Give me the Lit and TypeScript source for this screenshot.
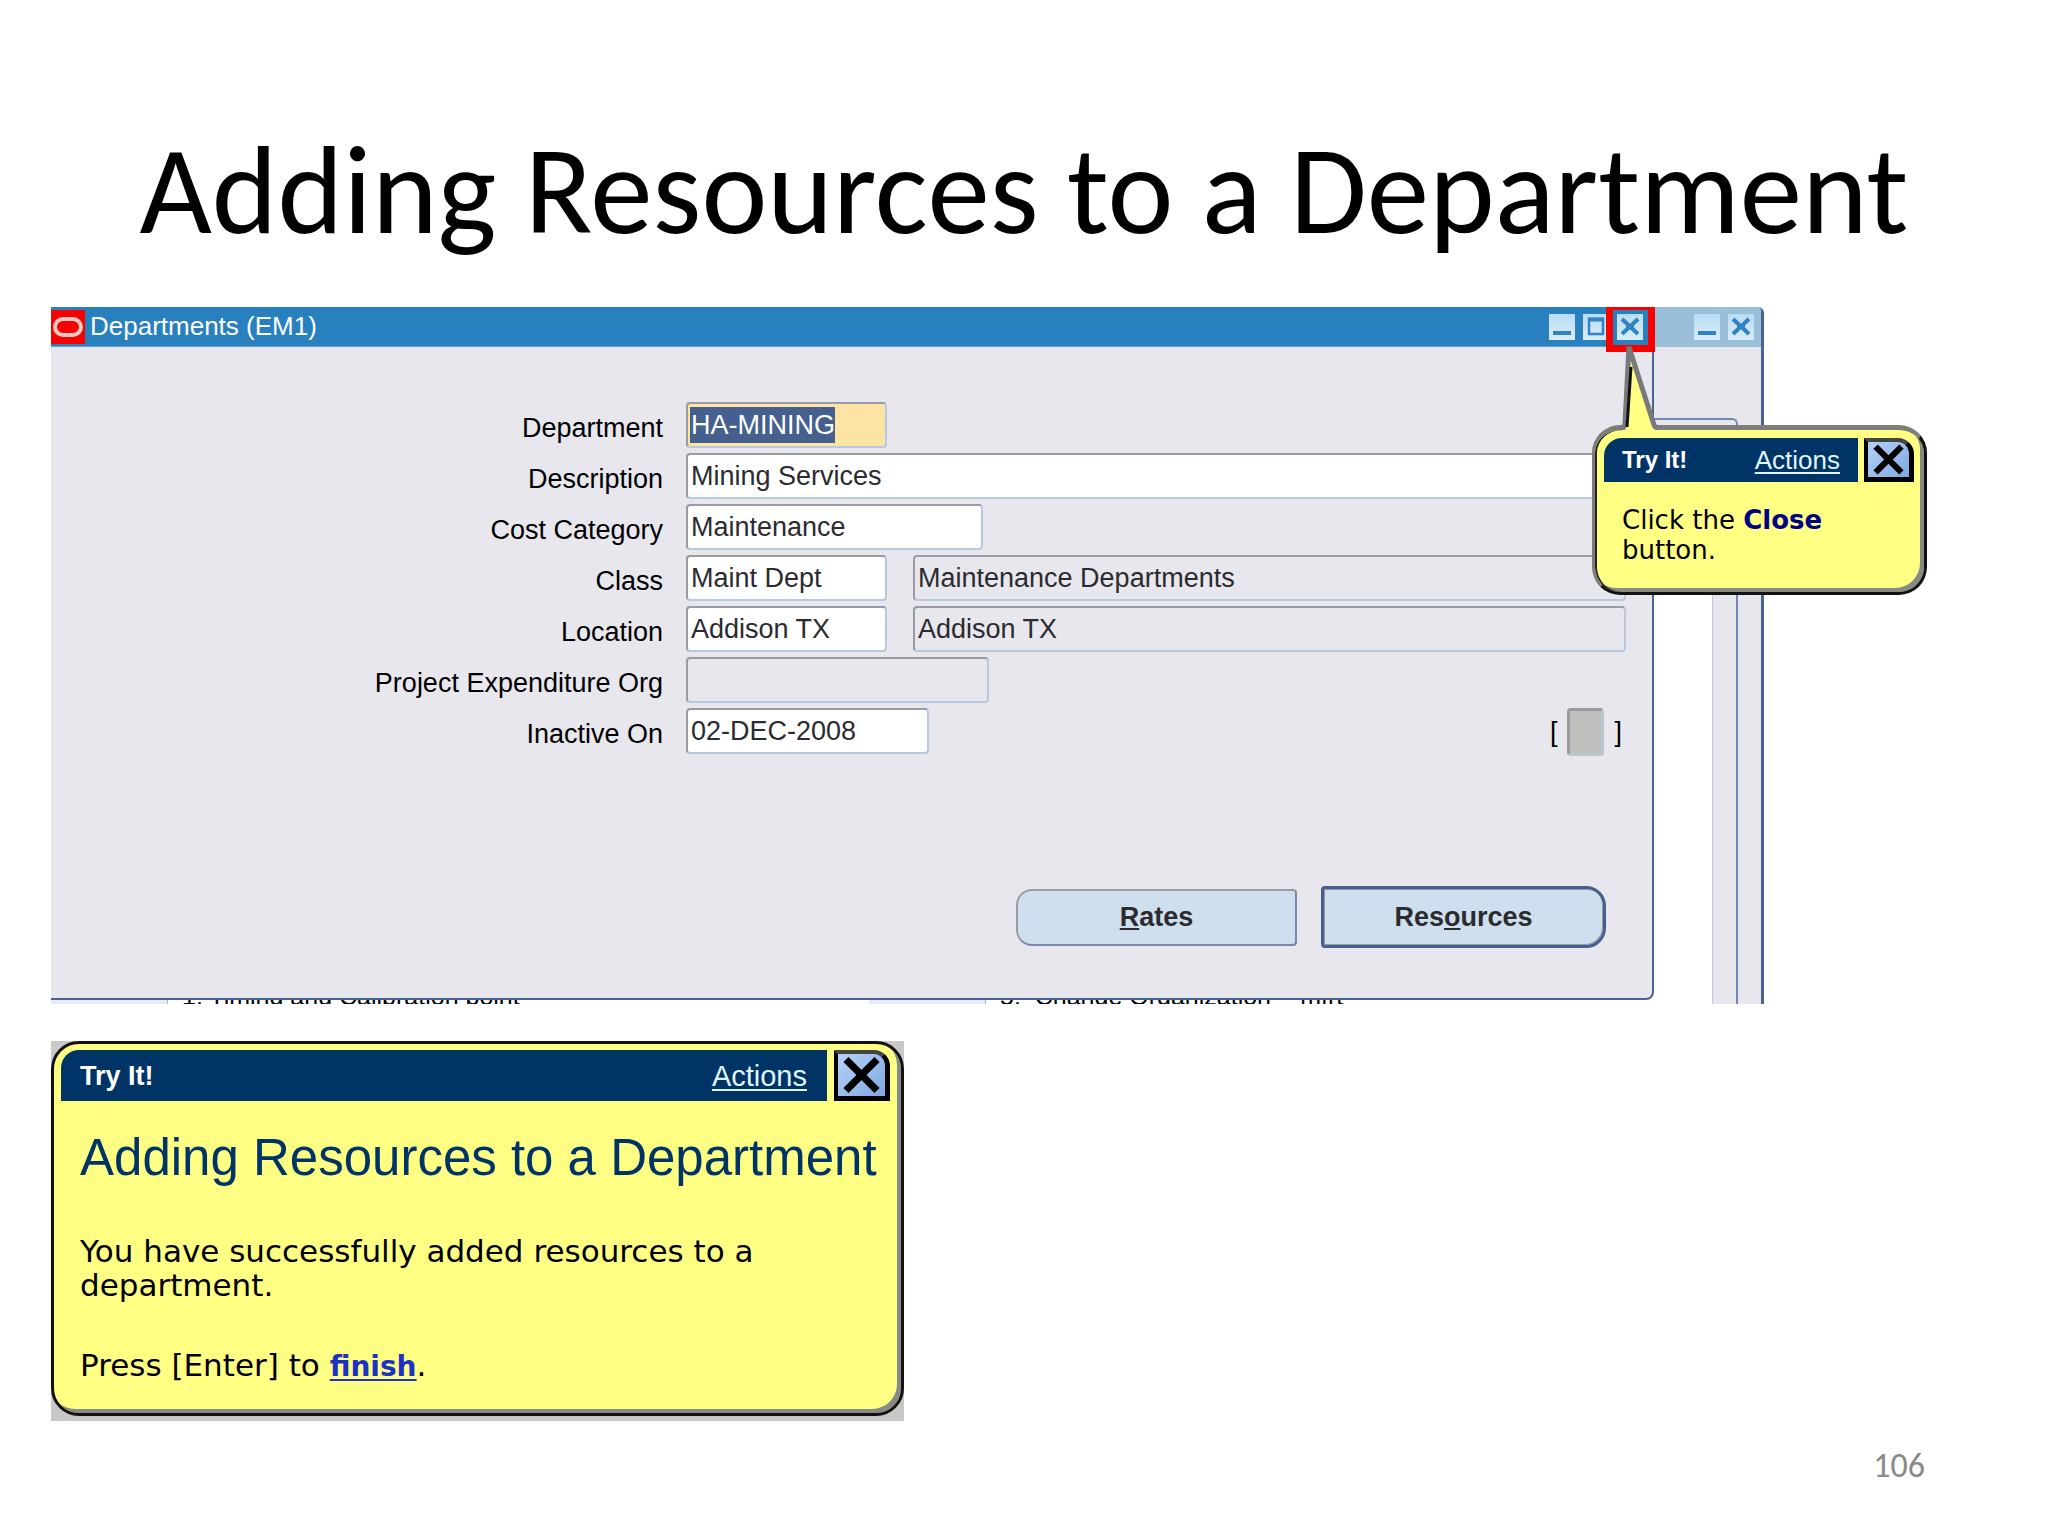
import { LitElement, html, css, svg } from "lit";
import { customElement, property } from "lit/decorators.js";

const cross = svg`<path d="M9 9 L26 26 M26 9 L9 26" />`;

@customElement("tip-balloon")
class TipBalloon extends LitElement {
  @property({ type: Boolean, reflect: true }) large = false;

  static styles = css`
    :host {
      display: block;
      box-sizing: border-box;
      background: #ffff84;
      border: 3px solid #111;
      border-top: 5px solid #7d7d7a;
      border-left-color: #7d7d7a;
      border-radius: 28px;
      box-shadow: inset 2px 0 0 #222, inset -4px -4px 0 #858a88;
      padding: 8px 10px 0 9px;
      font-family: "DejaVu Sans", Verdana, sans-serif;
      font-size: 26px;
      line-height: 30px;
      color: #000;
    }
    :host([large]) {
      border: 3px solid #111;
      box-shadow: inset -4px -4px 0 #858a88;
      padding: 6px 11px 0 7px;
      font-size: 31px;
      line-height: 34px;
    }
    .head {
      display: flex;
      gap: 6px;
      height: 44px;
    }
    :host([large]) .head {
      height: 51px;
      gap: 7px;
    }
    .bar {
      flex: 1;
      display: flex;
      align-items: center;
      justify-content: space-between;
      padding: 0 18px 0 18px;
      background: #003366;
      border-top-left-radius: 18px;
      font-family: "Liberation Sans", Arial, sans-serif;
      color: #fff;
    }
    :host([large]) .bar {
      padding: 0 20px 0 19px;
    }
    .name {
      font-size: 24px;
    }
    .actions {
      font-size: 26px;
      color: #dff6ff;
      text-underline-offset: 3px;
    }
    :host([large]) .name {
      font-size: 27px;
    }
    :host([large]) .actions {
      font-size: 29px;
    }
    .close {
      width: 50px;
      padding: 0;
      border: 5px solid #000;
      border-top-color: #444;
      border-left-width: 4px;
      border-top-width: 4px;
      border-top-right-radius: 16px;
      background: linear-gradient(135deg, #b5d2f5, #7fa9e4);
      display: grid;
      place-items: center;
    }
    :host([large]) .close {
      width: 56px;
    }
    .close svg {
      width: 100%;
      height: 100%;
      fill: none;
      stroke: #000;
      stroke-width: 4;
    }
    .body {
      padding: 23px 0 0 18px;
    }
    :host([large]) .body {
      padding: 28px 0 0 19px;
    }
  `;

  render() {
    return html`
      <div class="head">
        <div class="bar">
          <strong class="name">Try It!</strong>
          <a class="actions" href="#actions">Actions</a>
        </div>
        <button class="close" aria-label="Close tip">
          <svg viewBox="6 6 23 23">${cross}</svg>
        </button>
      </div>
      <div class="body"><slot></slot></div>
    `;
  }
}

type Row = { id: string; label: string; value: string; size: string; extra?: string };

const rows: Row[] = [
  { id: "department", label: "Department", value: "HA-MINING", size: "short key" },
  { id: "description", label: "Description", value: "Mining Services", size: "full" },
  { id: "cost", label: "Cost Category", value: "Maintenance", size: "medium" },
  { id: "class", label: "Class", value: "Maint Dept", size: "short", extra: "Maintenance Departments" },
  { id: "location", label: "Location", value: "Addison TX", size: "short", extra: "Addison TX" },
  { id: "project", label: "Project Expenditure Org", value: "", size: "long plain" },
  { id: "inactive", label: "Inactive On", value: "02-DEC-2008", size: "date" },
];

@customElement("app-root")
class AppRoot extends LitElement {
  static styles = css`
    :host {
      display: block;
      min-height: 100vh;
      box-sizing: border-box;
      background: #fff;
      color: #000;
      font-family: "Liberation Sans", Arial, sans-serif;
      font-size: 27px;
    }
    * {
      box-sizing: border-box;
    }
    .slide {
      display: flex;
      flex-direction: column;
      min-height: 100vh;
      padding: 111px 123px 50px 51px;
    }
    .title {
      margin: 0 -72px 36px 0;
      text-align: center;
      white-space: nowrap;
      font: 400 125px/160px Carlito, Calibri, "Open Sans", sans-serif;
    }
    .stage {
      position: relative;
      margin-right: 161px;
    }
    .desktop {
      display: grid;
      grid-template-columns: 1fr 107px;
      grid-template-rows: 693px 4px;
      border-right: 3px solid #4a6491;
      border-top-right-radius: 6px;
      overflow: hidden;
    }
    .window {
      display: flex;
      flex-direction: column;
      border: solid #4a6491;
      border-width: 0 2px 2px 0;
      border-bottom-right-radius: 8px;
      background: #e7e7ed;
    }
    .titlebar {
      display: flex;
      align-items: center;
      height: 40px;
      margin-right: -2px;
      padding-right: 11px;
      gap: 8px;
      background: #2980be;
      color: #fff;
      border-bottom: 1px solid #5fa4d6;
    }
    .brand {
      width: 34px;
      height: 34px;
      background: #f90000;
      display: block;
    }
    .caption {
      flex: 1;
      margin: 0 0 0 -3px;
      font-size: 26px;
      font-weight: 400;
    }
    .wbtn {
      width: 26px;
      height: 26px;
      padding: 0;
      border: 0;
      background: linear-gradient(#b9dcf3, #d9ecf9);
    }
    .wbtn svg {
      display: block;
      width: 26px;
      height: 26px;
      fill: none;
      stroke: #2f83c0;
      stroke-width: 4;
    }
    .form {
      flex: 1;
      display: flex;
      flex-direction: column;
      padding: 55px 26px 50px 0;
    }
    .rows {
      display: grid;
      grid-template-columns: 612px 1fr;
      column-gap: 23px;
      row-gap: 5px;
    }
    .label {
      text-align: right;
      line-height: 46px;
      padding-top: 3px;
      height: 46px;
    }
    .line {
      display: flex;
      gap: 26px;
    }
    .field {
      display: flex;
      align-items: center;
      height: 46px;
      border: 2px solid #b7c9df;
      border-top-color: #999ba5;
      border-left-color: #999ba5;
      border-radius: 4px;
      background: #fff;
      padding-left: 2px;
    }
    .input {
      width: 100%;
      min-width: 0;
      height: 36px;
      padding: 1px 0 0 1px;
      border: 0;
      outline: 0;
      background: transparent;
      color: #2b2b30;
      font: inherit;
    }
    .short { width: 201px; }
    .medium { width: 297px; }
    .long { width: 303px; }
    .date { width: 243px; }
    .full { flex: 1; }
    .plain { background: transparent; }
    .key { background: #fbe4a4; }
    .key .input {
      width: 145px;
      background: #45608f;
      color: #fff;
    }
    .flex {
      display: flex;
      align-items: center;
      gap: 10px;
      margin-left: auto;
      padding-right: 4px;
    }
    .flexbox {
      width: 37px;
      height: 48px;
      padding: 0;
      border: 3px solid #b9c6ce;
      border-top-color: #969ca0;
      border-left-color: #969ca0;
      border-radius: 4px;
      background: #bfbfbd;
    }
    .buttons {
      display: flex;
      align-items: center;
      justify-content: flex-end;
      gap: 24px;
      margin-top: auto;
      padding-right: 20px;
    }
    .btn {
      width: 281px;
      height: 57px;
      padding: 0;
      border: 2px solid #999ba5;
      border-bottom: 2px solid #7b88ad;
      border-right-color: #7b88ad;
      border-radius: 16px 4px 4px 16px;
      background: #cfdfee;
      color: #2b2b30;
      font: bold 27px "Liberation Sans", Arial, sans-serif;
    }
    .btn.main {
      width: 285px;
      height: 62px;
      border: 3px solid #45608f;
      border-radius: 4px 20px 20px 4px;
      box-shadow: inset 1px 1px 0 #999ba5, inset -1px -1px 0 #999ba5;
    }
    .rear {
      display: flex;
      flex-direction: column;
      grid-row: 1 / 3;
      grid-column: 2;
      background: #e7e7ed;
    }
    .rearbar {
      display: flex;
      align-items: center;
      justify-content: flex-end;
      gap: 8px;
      height: 40px;
      padding-right: 7px;
      background: #99bfd9;
    }
    .pane {
      flex: 1;
      margin: 71px 23px 0 0;
      border: 2px solid #7188b3;
      border-left: 0;
      border-bottom: 0;
      border-top-right-radius: 6px;
      display: flex;
    }
    .sheet {
      width: 59px;
      margin-top: 30px;
      background: #fff;
      border-right: 1px solid #c3c8dc;
    }
    .under {
      display: flex;
      height: 4px;
      overflow: hidden;
      background: #fff;
    }
    .peek {
      width: 117px;
      background: #e8eaf6;
      border-right: 1px solid #a9b7d6;
      flex: none;
    }
    .menu {
      flex: none;
      width: 701px;
      padding-left: 14px;
      line-height: 26px;
      margin-top: -17px;
      height: 26px;
      white-space: pre;
      font-size: 25px;
    }
    .spot {
      position: absolute;
      top: 0;
      right: 109px;
      width: 49px;
      height: 45px;
      border: 7px solid #f90000;
      border-top-width: 3px;
    }
    .tip {
      position: absolute;
      top: 118px;
      right: -163px;
      width: 335px;
      height: 170px;
    }
    .tail {
      position: absolute;
      top: 38px;
      right: 104px;
      width: 40px;
      height: 86px;
    }
    .tip b {
      color: #000084;
    }
    .note {
      align-self: flex-start;
      margin-top: 37px;
      background: #c8c8c8;
      padding-bottom: 5px;
      width: 853px;
    }
    .note tip-balloon {
      height: 375px;
    }
    .heading {
      margin: 0 0 47px;
      color: #003366;
      white-space: nowrap;
      font: 400 51px/58px "Liberation Sans", Arial, sans-serif;
    }
    .text {
      margin: 0 0 46px;
    }
    .text a {
      color: #1c32c4;
      font-size: 28px;
      font-weight: bold;
      text-underline-offset: 3px;
    }
    .page {
      margin-top: auto;
      align-self: flex-end;
      color: #898989;
      font: 34px/40px Carlito, Calibri, "Open Sans", sans-serif;
    }
  `;

  private winButton(kind: "min" | "max" | "close") {
    const shapes = {
      min: svg`<path d="M4 19 H22" />`,
      max: svg`<path d="M6 5 H20 V20 H6 Z" stroke-width="2.5" /><path d="M5 5.5 H21" />`,
      close: svg`<path d="M5 5 L21 20 M21 5 L5 20" /><path d="M9 12.5 H17" />`,
    };
    return html`<button type="button" class="wbtn" aria-label=${kind}><svg viewBox="0 0 26 26">${shapes[kind]}</svg></button>`;
  }

  private row(r: Row) {
    return html`
      <label class="label" for=${r.id}>${r.label}</label>
      <div class="line">
        <span class="field ${r.size}"><input class="input" id=${r.id} .value=${r.value} /></span>
        ${r.extra
          ? html`<span class="field full plain"><input class="input" readonly aria-label="${r.label} description" .value=${r.extra} /></span>`
          : null}
        ${r.id === "inactive"
          ? html`<span class="flex">[<button type="button" class="flexbox" aria-label="Flexfield"></button>]</span>`
          : null}
      </div>
    `;
  }

  render() {
    return html`
      <main class="slide">
        <h1 class="title">Adding Resources to a Department</h1>
        <section class="stage">
          <div class="desktop">
            <div class="window">
              <header class="titlebar">
                <svg class="brand" viewBox="0 0 34 34">
                  <rect x="4" y="9" width="26" height="16" rx="8" fill="none" stroke="#ffc9c4" stroke-width="4" />
                </svg>
                <h2 class="caption">Departments (EM1)</h2>
                ${this.winButton("min")}${this.winButton("max")}${this.winButton("close")}
              </header>
              <form class="form">
                <div class="rows">${rows.map((r) => this.row(r))}</div>
                <div class="buttons">
                  <button type="button" class="btn"><u>R</u>ates</button>
                  <button type="button" class="btn main">Res<u>o</u>urces</button>
                </div>
              </form>
            </div>
            <div class="rear">
              <div class="rearbar">${this.winButton("min")}${this.winButton("close")}</div>
              <div class="pane"><div class="sheet"></div></div>
            </div>
            <div class="under">
              <div class="peek"></div>
              <div class="menu">1. Timing and Calibration point</div>
              <div class="peek"></div>
              <div class="menu">5.  Change Organization  - mfrt</div>
            </div>
          </div>
          <div class="spot"></div>
          <tip-balloon class="tip">Click the <b>Close</b><br />button.</tip-balloon>
          <svg class="tail" viewBox="0 0 40 86">
            <path d="M5 86 V80 L9 2 L35 80 V86 Z" fill="#ffff84" />
            <path d="M0 83 Q5 83 5 78 L9 2 L34 80 L36 83" fill="none" stroke="#77797a" stroke-width="5" />
            <path d="M7 82 L11 22" fill="none" stroke="#111" stroke-width="3" />
          </svg>
        </section>
        <section class="note">
          <tip-balloon large>
            <h2 class="heading">Adding Resources to a Department</h2>
            <p class="text">You have successfully added resources to a<br />department.</p>
            <p class="text">Press [Enter] to <a href="#finish">finish</a>.</p>
          </tip-balloon>
        </section>
        <footer class="page">106</footer>
      </main>
    `;
  }
}
